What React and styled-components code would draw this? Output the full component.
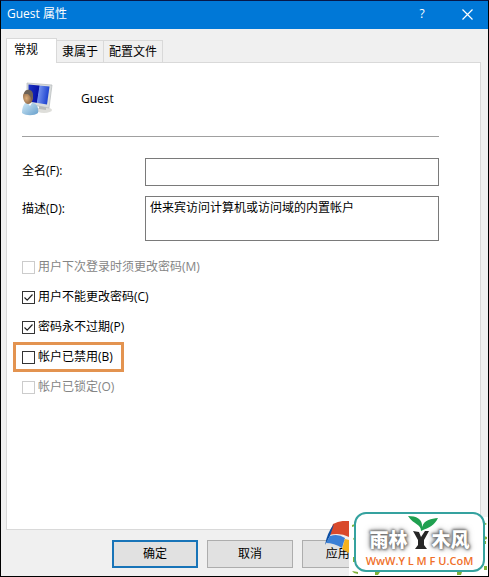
import React from 'react';
import styled, { createGlobalStyle } from 'styled-components';

const GlobalStyle = createGlobalStyle`
  * {
    box-sizing: border-box;
  }
  body {
    margin: 0;
    background: #fff;
    color: #000;
    font: 12px/18px "Open Sans", "Noto Sans CJK SC", sans-serif;
  }
  button, input, textarea {
    font: inherit;
    color: inherit;
  }
`;

const Dialog = styled.main`
  position: relative;
  display: flex;
  flex-direction: column;
  min-height: 100vh;
  overflow: hidden;
  border: 1px solid #000;
  border-top-color: #06184a;
  background: #f0f0f0;
`;

const TitleBar = styled.header`
  display: flex;
  align-items: center;
  height: 28px;
  padding: 0 10px 2px 6px;
  background: #0078d7;
  color: #fff;
`;

const Title = styled.h1`
  flex: 1;
  margin: 0;
  font-size: 12px;
  font-weight: 400;
`;

const TitleButton = styled.button`
  display: flex;
  align-items: center;
  justify-content: center;
  width: 22px;
  height: 24px;
  margin-left: 23px;
  padding: 0;
  border: 0;
  background: none;
`;

const Tabs = styled.nav`
  display: flex;
  align-items: flex-end;
  height: 33px;
  padding-left: 5px;
`;

const Tab = styled.button`
  position: relative;
  height: ${(p) => (p.$active ? 25 : 22)}px;
  margin-bottom: ${(p) => (p.$active ? -1 : 0)}px;
  padding: ${(p) => (p.$active ? '0 18px 3px 7px' : '0 5px')};
  border: 1px solid #d9d9d9;
  border-bottom: 0;
  border-left-width: ${(p) => (p.$active ? 1 : 0)}px;
  background: ${(p) => (p.$active ? '#fff' : '#f0f0f0')};
  z-index: 1;
`;

const Panel = styled.section`
  flex: 1;
  margin: 0 7px 0 5px;
  padding: 15px 41px 20px 15px;
  border: 1px solid #d9d9d9;
  background: #fff;
`;

const Account = styled.div`
  display: flex;
  align-items: center;
  gap: 27px;
  height: 58px;
  padding-bottom: 17px;
`;

const Rule = styled.hr`
  height: 1px;
  margin: 0 0 21px;
  border: 0;
  background: #a0a0a0;
`;

const Field = styled.div`
  display: flex;
  align-items: flex-start;
  margin-bottom: 10px;
`;

const FieldLabel = styled.label`
  width: 123px;
  padding-top: 4px;
`;

const TextInput = styled.input`
  flex: 1;
  min-width: 0;
  height: 28px;
  padding: 2px 4px;
  border: 1px solid #7a7a7a;
  border-radius: 0;
  background: #fff;
`;

const TextArea = styled.textarea`
  flex: 1;
  min-width: 0;
  height: 45px;
  padding: 2px 4px;
  border: 1px solid #7a7a7a;
  border-radius: 0;
  background: #fff;
  resize: none;
`;

const Options = styled.div`
  display: flex;
  flex-direction: column;
  align-items: flex-start;
  margin: 11px 0 0 -9px;
`;

const Option = styled.label`
  display: flex;
  align-items: center;
  gap: 3px;
  height: 30px;
  padding: 0 8px 0 6px;
  border: 3px solid ${(p) => (p.$marked ? '#e39350' : 'transparent')};
  color: ${(p) => (p.$disabled ? '#858585' : '#000')};
`;

const CheckBox = styled.input`
  appearance: none;
  width: 13px;
  height: 13px;
  margin: 0;
  border: 1px solid #333;
  background: #fff;
  &:disabled {
    border-color: #ccc;
  }
  &:checked {
    background: url("data:image/svg+xml,%3Csvg xmlns='http://www.w3.org/2000/svg' viewBox='0 0 11 11'%3E%3Cpath d='M1.5 5.5l2.7 2.7 5.3-5.7' fill='none' stroke='%23222' stroke-width='1.2'/%3E%3C/svg%3E");
  }
`;

const Footer = styled.footer`
  display: flex;
  justify-content: flex-end;
  gap: 9px;
  padding: 10px 100px 8px 0;
`;

const Button = styled.button`
  width: 86px;
  height: 28px;
  padding: 0;
  border: ${(p) => (p.$primary ? '2px solid #1874b8' : '1px solid #adadad')};
  background: #e1e1e1;
`;

const Watermark = styled.aside`
  position: absolute;
  right: -1px;
  bottom: -1px;
  width: 140px;
  height: 60px;
  background: #fff;
`;

const Specks = styled.svg`
  display: block;
`;

const Flag = styled.svg`
  position: absolute;
  left: -24px;
  top: 4px;
`;

const Badge = styled.div`
  position: absolute;
  left: 5px;
  top: -5px;
  width: 131px;
  height: 60px;
  padding-top: 12px;
  border: 2px solid #35a29f;
  border-radius: 12px;
  background: #fff;
  text-align: center;
`;

const BadgeName = styled.div`
  display: flex;
  justify-content: center;
  gap: 24px;
  height: 26px;
  color: #fff;
  font: 900 19px/26px "Noto Sans CJK SC", sans-serif;
  text-shadow: 0 0 2px #666, 1px 1px 3px #777, -1px -1px 3px #888, 0 0 6px #777;
`;

const Sprout = styled.svg`
  position: absolute;
  left: 49px;
  top: -2px;
`;

const BadgeUrl = styled.div`
  color: #f0702a;
  font: 600 11px/18px "Open Sans", sans-serif;
`;

const options = [
  { id: 'change', label: '用户下次登录时须更改密码(M)', disabled: true },
  { id: 'fixed', label: '用户不能更改密码(C)', checked: true },
  { id: 'never', label: '密码永不过期(P)', checked: true },
  { id: 'off', label: '帐户已禁用(B)', marked: true },
  { id: 'locked', label: '帐户已锁定(O)', disabled: true },
];

const UserIcon = () => (
  <svg width="32" height="34" viewBox="0 0 32 34" aria-hidden="true">
    <defs>
      <linearGradient id="screen" x1="0" y1="0" x2="1" y2="0.15">
        <stop offset="0" stopColor="#1d35c4" />
        <stop offset=".5" stopColor="#0712a8" />
        <stop offset=".54" stopColor="#6f8eec" />
        <stop offset="1" stopColor="#1e43d0" />
      </linearGradient>
      <linearGradient id="shirt" x1="0" y1="0" x2="1" y2="1">
        <stop offset="0" stopColor="#d5edf9" />
        <stop offset="1" stopColor="#659ecb" />
      </linearGradient>
      <radialGradient id="skin" cx=".35" cy=".55">
        <stop offset="0" stopColor="#dfb07c" />
        <stop offset="1" stopColor="#8f6948" />
      </radialGradient>
    </defs>
    <ellipse cx="22" cy="28" rx="8" ry="3" fill="#dededa" />
    <path d="M17 23l7 1v4l-7-1z" fill="#b9bbb9" />
    <path d="M5 1l25 2-3 23-22-4z" fill="#d9dcdb" stroke="#b5b9bb" strokeWidth=".7" />
    <path d="M6.5 2.5l21 2-2.500 18-18.500-3z" fill="url(#screen)" />
    <path d="M0 31c0-6 2-10 5-11l6 1c4 1 6 5 5 10-4 3-12 3-16 0z" fill="url(#shirt)" />
    <path d="M5 20l3 4 2-3z" fill="#fff" />
    <path d="M1 14c0-6 10-7 10 1 0 4-2 7-5 7s-5-4-5-8z" fill="url(#skin)" />
    <path d="M2 12c0-6 10-6 9 2l-1 4-2-4-2-2z" fill="#6d6257" />
  </svg>
);

const App = () => {
  return (
    <>
      <GlobalStyle />
      <Dialog>
        <TitleBar>
          <Title>Guest 属性</Title>
          <TitleButton aria-label="Help">?</TitleButton>
          <TitleButton aria-label="Close">
            <svg width="11" height="11" viewBox="0 0 11 11" stroke="#fff" strokeWidth="1.2">
              <path d="M.5.5l10 10M10.5.5l-10 10" />
            </svg>
          </TitleButton>
        </TitleBar>
        <Tabs>
          <Tab $active>常规</Tab>
          <Tab>隶属于</Tab>
          <Tab>配置文件</Tab>
        </Tabs>
        <Panel>
          <Account>
            <UserIcon />
            <span>Guest</span>
          </Account>
          <Rule />
          <Field>
            <FieldLabel htmlFor="fullname">全名(F):</FieldLabel>
            <TextInput id="fullname" />
          </Field>
          <Field>
            <FieldLabel htmlFor="description">描述(D):</FieldLabel>
            <TextArea id="description" defaultValue="供来宾访问计算机或访问域的内置帐户" />
          </Field>
          <Options>
            {options.map((o) => (
              <Option key={o.id} $marked={o.marked} $disabled={o.disabled}>
                <CheckBox type="checkbox" defaultChecked={o.checked} disabled={o.disabled} />
                {o.label}
              </Option>
            ))}
          </Options>
        </Panel>
        <Footer>
          <Button $primary>确定</Button>
          <Button>取消</Button>
          <Button>应用(A)</Button>
        </Footer>
        <Watermark>
          <Specks width="140" height="60" viewBox="0 0 140 60" aria-hidden="true">
            <path
              d="M3 8l3-1v2l-3 1zM4 22l2-3v5zM135 5l3 2-2 1zM135 19l3 1v2l-3 1zM135 24h2v3h-2zM4 40h2v5h-2zM3 54l6 1v2l-4-1zM26 55h5l-2 3h-3zM108 55h5l-1 3h-4zM135 49h3v4h-3z"
              fill="#7fb23a"
            />
          </Specks>
          <Flag width="24" height="32" viewBox="0 0 24 32">
            <path d="M8 3q8-4 16-3v16q-9-5-20-2z" fill="#d9492b" />
            <path d="M0 24q2-12 9-21l-4 12z" fill="#0b4da2" />
            <path d="M1 22l4-7q8-3 15 2l-3 10q-8-5-16-5z" fill="#3a7fd5" />
            <path d="M20 18l4 1v13l-7-4z" fill="#f5b21c" />
          </Flag>
          <Badge>
            <BadgeName>
              <span>雨林</span>
              <span>木风</span>
            </BadgeName>
            <Sprout width="34" height="38" viewBox="0 0 34 38">
              <path d="M8 19l6 1 2 5 4-6h4l-5 9v5l3 4H10l3-4v-5z" fill="#262626" />
              <path d="M16 19C16 12 9 13 3 4c8 0 15 3 14 11 3-8 9-8 16-9-4 8-8 9-17 13z" fill="#20a050" />
            </Sprout>
            <BadgeUrl>WwW.Y L M F U.CoM</BadgeUrl>
          </Badge>
        </Watermark>
      </Dialog>
    </>
  );
};

export default App;
